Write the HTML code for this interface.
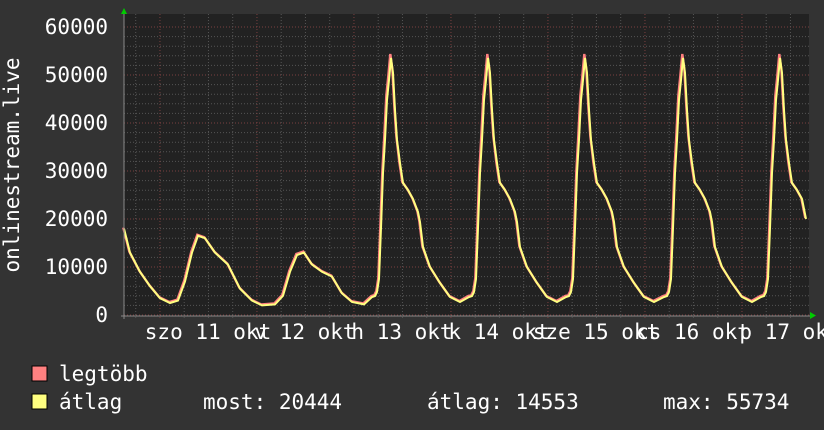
<!DOCTYPE html>
<html><head><meta charset="utf-8"><style>
html,body{margin:0;padding:0;background:#333;}
svg{display:block}
text{font-family:"DejaVu Sans Mono","Liberation Mono",monospace;fill:#fff;font-size:21px}
</style></head><body>
<svg id="s" width="824" height="430" xmlns="http://www.w3.org/2000/svg">
<rect width="824" height="430" fill="#333"/>
<rect x="124" y="14" width="685" height="302" fill="#222"/>
<g id="grid"></g>
<path id="red" fill="none" stroke="#ff8080" stroke-width="2.4"/>
<path id="yel" fill="none" stroke="#ffff80" stroke-width="2"/>
<line x1="121" y1="316" x2="812" y2="316" stroke="#888" stroke-width="1"/>
<line x1="124" y1="12" x2="124" y2="319" stroke="#888" stroke-width="1"/>
<polygon points="121,14 127,14 124,8" fill="#0c0"/>
<polygon points="810,312 810,319 816,315.5" fill="#0c0"/>
<g text-anchor="end">
<text x="108" y="34">60000</text>
<text x="108" y="82">50000</text>
<text x="108" y="130">40000</text>
<text x="108" y="178">30000</text>
<text x="108" y="226">20000</text>
<text x="108" y="274">10000</text>
<text x="108" y="322">0</text>
</g>
<text transform="translate(19,165) rotate(-90)" text-anchor="middle">onlinestream.live</text>
<g text-anchor="middle">
<text x="208" y="339">szo 11 okt</text>
<text x="305" y="339">v 12 okt</text>
<text x="402" y="339">h 13 okt</text>
<text x="499" y="339">k 14 okt</text>
<text x="596" y="339">sze 15 okt</text>
<text x="693" y="339">cs 16 okt</text>
<text x="790" y="339">p 17 okt</text>
</g>
<rect x="32" y="366" width="15" height="15" fill="#ff8080" stroke="#000"/>
<rect x="32" y="394" width="15" height="15" fill="#ffff80" stroke="#000"/>
<text x="59" y="381">legtöbb</text>
<text x="59" y="409">átlag</text>
<text x="203" y="409">most: 20444</text>
<text x="427" y="409">átlag: 14553</text>
<text x="663" y="409">max: 55734</text>
</svg>
<script>
var g=document.getElementById('grid'),h='';
for(var i=0;i<31;i++){var y=315-i*9.6;var maj=i%5==0;
h+='<line x1="124" x2="809" y1="'+y+'" y2="'+y+'" stroke="'+(maj?'#7a4040':'#555')+'" stroke-dasharray="1,2"/>';}
for(var x=135.7;x<809;x+=24.25){var k=Math.round((x-160)/24.25);var maj=((k%4)+4)%4==0;
h+='<line y1="14" y2="319" x1="'+x+'" x2="'+x+'" stroke="'+(maj?'#7a4040':'#555')+'" stroke-dasharray="1,2"/>';}
g.innerHTML=h;
function Y(v){return 315-v*0.0048}
var pts=[[124,Y(18000)],[130,Y(13000)],[140,Y(9000)],[150,Y(6000)],[160,Y(3500)],[170,Y(2500)],[178,Y(3000)],[185,Y(7000)],[192,Y(13000)],[198,Y(16500)],[205,Y(16000)],[215,Y(13000)],[228,Y(10500)],[240,Y(5500)],[252,Y(3000)],[262,Y(2000)],[275,Y(2200)],[283,Y(4000)],[290,Y(9000)],[297,Y(12500)],[304,Y(13000)],[312,Y(10500)],[322,Y(9000)],[332,Y(8000)],[342,Y(4500)],[352,Y(2700)],[364,Y(2200)]];
var tpl=[[-19,297],[-16,296],[-14,292],[-12,279],[-10,228],[-8,173],[-6,140],[-4,100],[-2,80],[0,58],[2,73],[4,110],[6,140],[9,163],[12,183],[17,190],[22,199],[27,212],[29,222],[32,247],[39,267],[49,283],[59,297],[69,302]];
[391,488,585,683,780].forEach(function(P){tpl.forEach(function(t){var x=P+t[0];if(x>=372&&x<=803)pts.push([x,t[1]]);});});
pts.push([806,219]);
var dy='',dr='';
pts.forEach(function(p,i){dy+=(i?'L':'M')+p[0]+' '+p[1].toFixed(1);var y=p[1]<150?p[1]-4:p[1]-1;dr+=(i?'L':'M')+(p[0]-0.7)+' '+y.toFixed(1);});
document.getElementById('yel').setAttribute('d',dy);
document.getElementById('red').setAttribute('d',dr);
</script>
</body></html>
